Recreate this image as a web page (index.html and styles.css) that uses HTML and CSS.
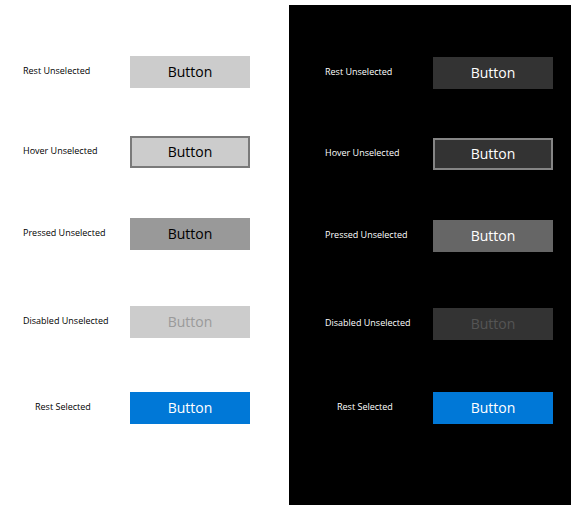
FILE: index.html
```html
<!DOCTYPE html>
<html lang="en">
<head>
  <meta charset="UTF-8" />
  <meta name="viewport" content="width=device-width, initial-scale=1.0"/>
  <title>Button States</title>
  <link rel="stylesheet" href="styles.css">
</head>
<body>

  <main class="board">

    <!-- light theme -->
    <section class="theme theme-light">
      <div class="states">
        <span class="label">Rest Unselected</span>
        <button class="btn">Button</button>

        <span class="label">Hover Unselected</span>
        <button class="btn hover">Button</button>

        <span class="label">Pressed Unselected</span>
        <button class="btn pressed">Button</button>

        <span class="label">Disabled Unselected</span>
        <button class="btn" disabled>Button</button>

        <span class="label label-short">Rest Selected</span>
        <button class="btn selected">Button</button>
      </div>
    </section>

    <!-- dark theme -->
    <section class="theme theme-dark">
      <div class="states">
        <span class="label">Rest Unselected</span>
        <button class="btn">Button</button>

        <span class="label">Hover Unselected</span>
        <button class="btn hover">Button</button>

        <span class="label">Pressed Unselected</span>
        <button class="btn pressed">Button</button>

        <span class="label">Disabled Unselected</span>
        <button class="btn" disabled>Button</button>

        <span class="label label-short">Rest Selected</span>
        <button class="btn selected">Button</button>
      </div>
    </section>

  </main>

</body>
</html>
```

FILE: styles.css
```css
:root {
  --accent: #0078d7;
}

body {
  margin: 0;
  background: #ffffff;
  font-family: 'Open Sans', 'Noto Sans', sans-serif;
}

.board {
  display: flex;
  align-items: flex-start;
}

.theme {
  box-sizing: border-box;
}

.theme-light {
  width: 289px;
  padding: 56px 0 0 23px;
  color: #000000;
}

.theme-dark {
  width: 282px;
  height: 500px;
  margin-top: 5px;
  padding: 52px 0 0 36px;
  background: #000000;
  color: #ffffff;
}

.states {
  display: grid;
  grid-template-columns: 107px 120px;
  grid-template-rows: 80px 82px 88px 86px 32px;
  align-items: start;
}

.theme-dark .states {
  grid-template-columns: 108px 120px;
  grid-template-rows: 81px 82px 88px 84px 32px;
}

.label {
  font-size: 9px;
  line-height: 30px;
  white-space: nowrap;
}

.label-short {
  padding-left: 12px;
}

.btn {
  box-sizing: border-box;
  width: 120px;
  height: 32px;
  padding: 0;
  border: 2px solid transparent;
  font-family: inherit;
  font-size: 14px;
  line-height: 26px;
}

/* light button states */
.theme-light .btn {
  background: #cccccc;
  color: #000000;
}

.theme-light .btn.hover {
  border-color: #7a7a7a;
}

.theme-light .btn.pressed {
  background: #999999;
}

.theme-light .btn:disabled {
  color: #9a9a9a;
}

/* dark button states */
.theme-dark .btn {
  background: #333333;
  color: #ffffff;
}

.theme-dark .btn.hover {
  border-color: #858585;
}

.theme-dark .btn.pressed {
  background: #666666;
}

.theme-dark .btn:disabled {
  color: #555555;
}

.theme .btn.selected {
  background: var(--accent);
  color: #ffffff;
}
```
